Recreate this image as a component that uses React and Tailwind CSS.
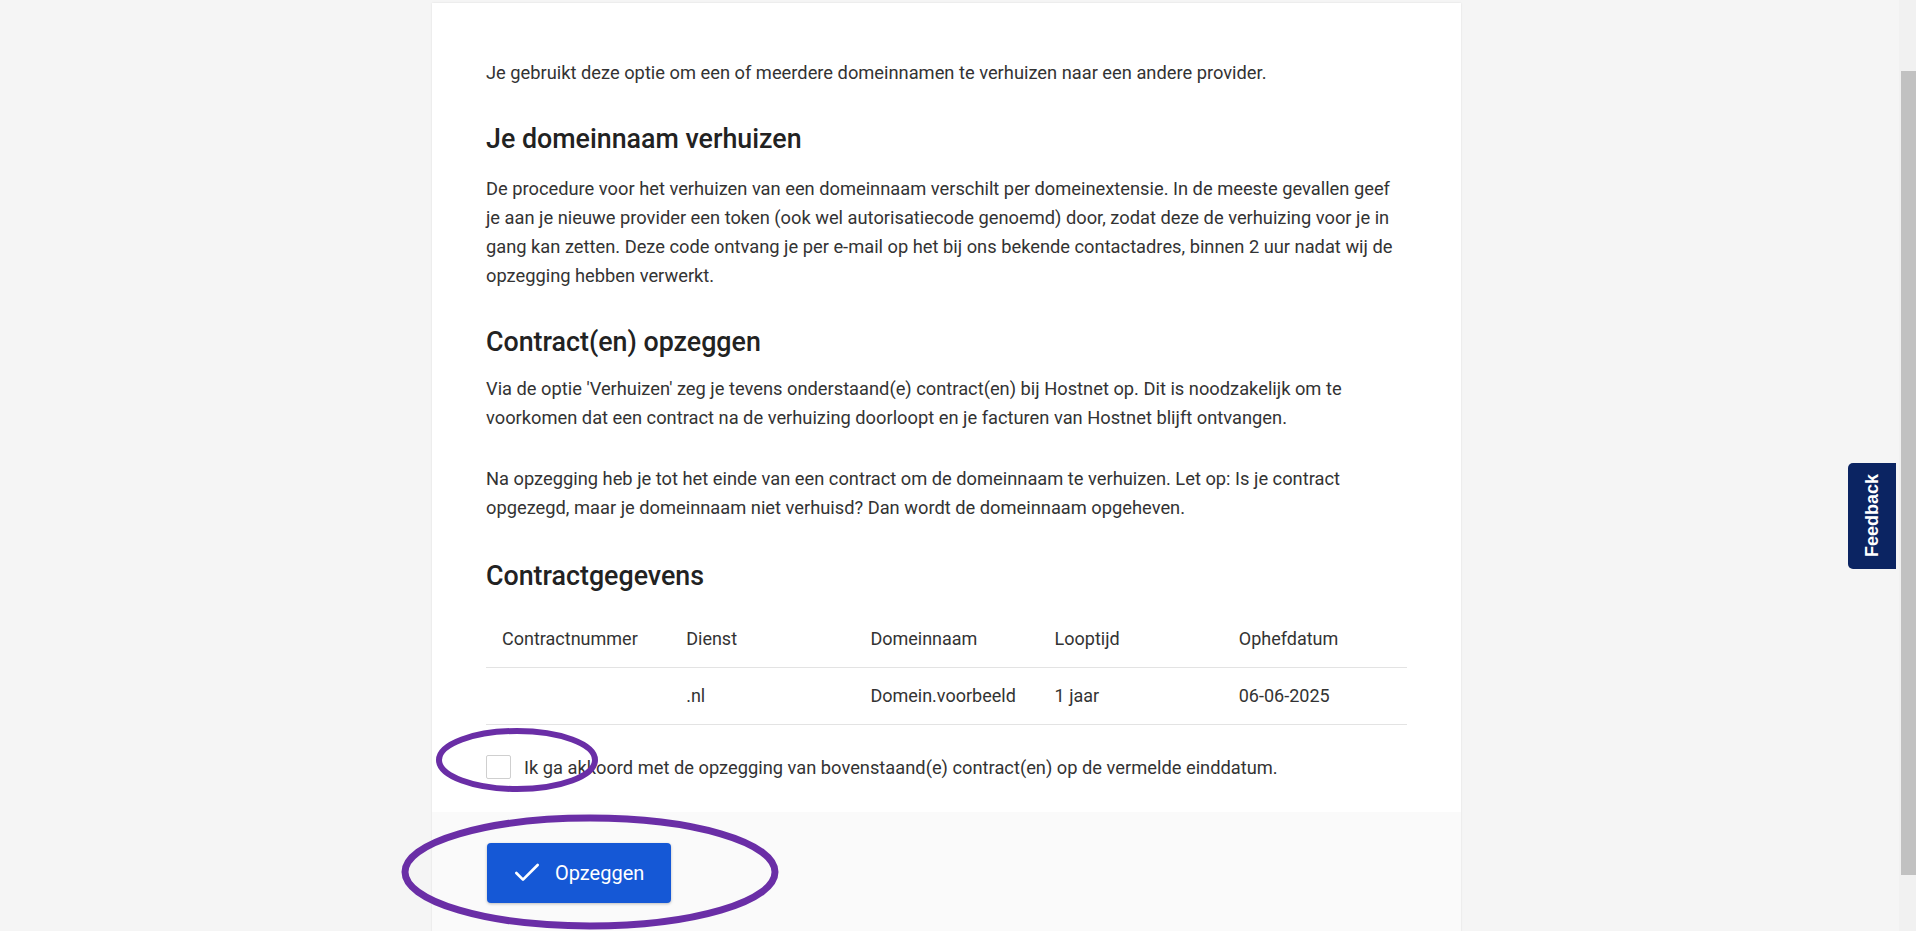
import { Check } from 'lucide-react';

const columns = ['Contractnummer', 'Dienst', 'Domeinnaam', 'Looptijd', 'Ophefdatum'];

const contracts = [
  { nummer: '', dienst: '.nl', domein: 'Domein.voorbeeld', looptijd: '1 jaar', ophefdatum: '06-06-2025' },
];

function App() {
  return (
    <div className="relative flex h-[931px] w-full overflow-hidden bg-[#f5f5f5] font-['Roboto',sans-serif] text-[#333]">
      <main className="flex-1 pl-[432px] pt-[3px]">
        <div className="w-[1029px] bg-white shadow-[0_0_2px_rgba(0,0,0,0.1)]">
          <div className="px-[54px] pt-[55px] pb-[30px] text-[18px] leading-[29px]">
            <p className="text-[18.3px]">Je gebruikt deze optie om een of meerdere domeinnamen te verhuizen naar een andere provider.</p>

            {/* Verhuizen */}
            <h2 className="mt-[36px] text-[26.8px] font-medium leading-[32px] text-[#222]">Je domeinnaam verhuizen</h2>
            <p className="mt-[19px] text-[18.3px]">
              De procedure voor het verhuizen van een domeinnaam verschilt per domeinextensie. In de meeste gevallen geef
              je aan je nieuwe provider een token (ook wel autorisatiecode genoemd) door, zodat deze de verhuizing voor je in
              gang kan zetten. Deze code ontvang je per e-mail op het bij ons bekende contactadres, binnen 2 uur nadat wij de
              opzegging hebben verwerkt.
            </p>

            {/* Opzeggen */}
            <h2 className="mt-[36px] text-[26.8px] font-medium leading-[32px] text-[#222]">Contract(en) opzeggen</h2>
            <p className="mt-[16px] text-[18.3px]">
              Via de optie 'Verhuizen' zeg je tevens onderstaand(e) contract(en) bij Hostnet op. Dit is noodzakelijk om te
              voorkomen dat een contract na de verhuizing doorloopt en je facturen van Hostnet blijft ontvangen.
            </p>
            <p className="mt-[32px] text-[18.3px]">
              Na opzegging heb je tot het einde van een contract om de domeinnaam te verhuizen. Let op: Is je contract
              opgezegd, maar je domeinnaam niet verhuisd? Dan wordt de domeinnaam opgeheven.
            </p>

            {/* Contractgegevens */}
            <h2 className="mt-[38px] text-[26.8px] font-medium leading-[32px] text-[#222]">Contractgegevens</h2>
            <table className="mt-[18px] w-full table-fixed border-collapse">
              <thead>
                <tr className="border-b border-[#e3e3e3]">
                  {columns.map((col) => (
                    <th key={col} className="h-[57px] pl-4 text-left font-normal">
                      {col}
                    </th>
                  ))}
                </tr>
              </thead>
              <tbody>
                {contracts.map((c) => (
                  <tr key={c.domein} className="border-b border-[#e3e3e3]">
                    <td className="h-[57px] pl-4">{c.nummer}</td>
                    <td className="h-[57px] pl-4">{c.dienst}</td>
                    <td className="h-[57px] pl-4">{c.domein}</td>
                    <td className="h-[57px] pl-4">{c.looptijd}</td>
                    <td className="h-[57px] pl-4">{c.ophefdatum}</td>
                  </tr>
                ))}
              </tbody>
            </table>

            <label className="mt-[28px] flex items-center gap-[13px]">
              <span className="h-[24px] w-[25px] rounded-[2px] border border-[#cfcfcf] bg-white" />
              <span className="text-[18.3px]">Ik ga akkoord met de opzegging van bovenstaand(e) contract(en) op de vermelde einddatum.</span>
            </label>
          </div>

          {/* Footer */}
          <div className="h-[200px] bg-[#fafafa] px-[55px] pt-[31px]">
            <button className="flex h-[60px] w-[184px] items-center gap-[12px] rounded-[4px] bg-[#1558d6] pl-[24px] text-[20px] text-white shadow-[0_1px_3px_rgba(0,0,0,0.25)]">
              <Check size={32} strokeWidth={2} />
              Opzeggen
            </button>
          </div>
        </div>
      </main>

      {/* Scrollbar */}
      <div className="flex w-[17px] flex-col bg-[#f1f1f1] pt-[71px] pl-[2px]">
        <div className="h-[804px] w-[15px] bg-[#c1c1c1]" />
      </div>

      {/* Feedback tab */}
      <div className="absolute right-[20px] top-[463px] flex h-[106px] w-[48px] items-center justify-center rounded-l-[5px] bg-[#0b2462]">
        <span className="rotate-180 font-['Liberation_Sans',sans-serif] text-[18px] font-bold text-white [writing-mode:vertical-rl]">
          Feedback
        </span>
      </div>

      {/* Annotaties */}
      <svg className="pointer-events-none absolute inset-0" width="1916" height="931">
        <ellipse cx="517" cy="760" rx="78" ry="29" fill="none" stroke="#6a2ea6" strokeWidth="6" />
        <ellipse cx="590" cy="872" rx="185" ry="54" fill="none" stroke="#6a2ea6" strokeWidth="7" />
      </svg>
    </div>
  );
}

export default App;
